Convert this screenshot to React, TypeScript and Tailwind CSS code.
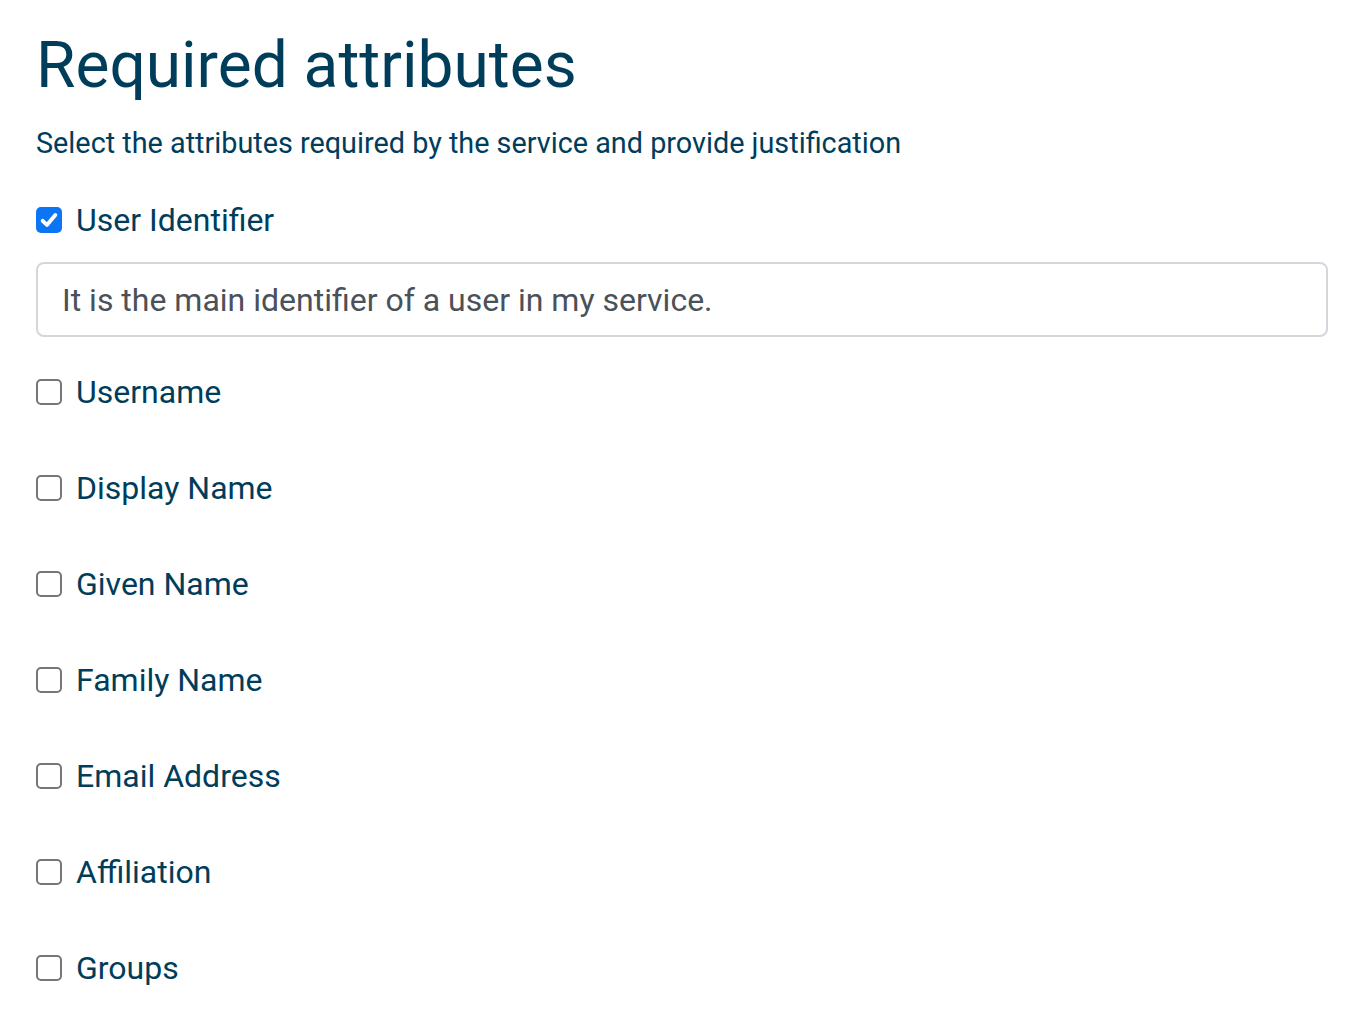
const attributes = [
  "Username",
  "Display Name",
  "Given Name",
  "Family Name",
  "Email Address",
  "Affiliation",
  "Groups",
];

function Box({ checked }: { checked?: boolean }) {
  if (checked) {
    return (
      <span className="flex h-[26px] w-[26px] shrink-0 items-center justify-center rounded-[5px] bg-[#0b75f5]">
        <svg viewBox="0 0 16 16" className="h-[22px] w-[22px]" fill="none">
          <path
            d="M3.4 8.6 6.5 11.6 12.6 4.4"
            stroke="white"
            strokeWidth={2.8}
            strokeLinecap="round"
            strokeLinejoin="round"
          />
        </svg>
      </span>
    );
  }
  return (
    <span className="h-[26px] w-[26px] shrink-0 rounded-[5px] border-2 border-[#767676] bg-white" />
  );
}

export default function App() {
  return (
    <div
      className="min-h-[1024px] bg-white pl-[36px] pr-[22px] pt-[26px] text-[#003d5b]"
      style={{ fontFamily: "Roboto, 'Liberation Sans', sans-serif" }}
    >
      <h1 className="text-[64px] leading-[80px] font-normal">Required attributes</h1>
      <p className="mt-[19px] text-[28.8px] leading-[36px]">
        Select the attributes required by the service and provide justification
      </p>

      <div className="mt-[41px] flex items-center gap-[14px] h-[36px]">
        <Box checked />
        <span className="text-[32px] leading-[36px]">User Identifier</span>
      </div>
      <div className="mt-[24px] flex h-[75px] items-center rounded-[8px] border-2 border-[#d3d7dc] px-[24px] text-[32px] text-[#4a5159]">
        It is the main identifier of a user in my service.
      </div>

      <div className="mt-[37px] flex flex-col gap-[60px]">
        {attributes.map((a) => (
          <div key={a} className="flex h-[36px] items-center gap-[14px]">
            <Box />
            <span className="text-[32px] leading-[36px]">{a}</span>
          </div>
        ))}
      </div>
    </div>
  );
}
